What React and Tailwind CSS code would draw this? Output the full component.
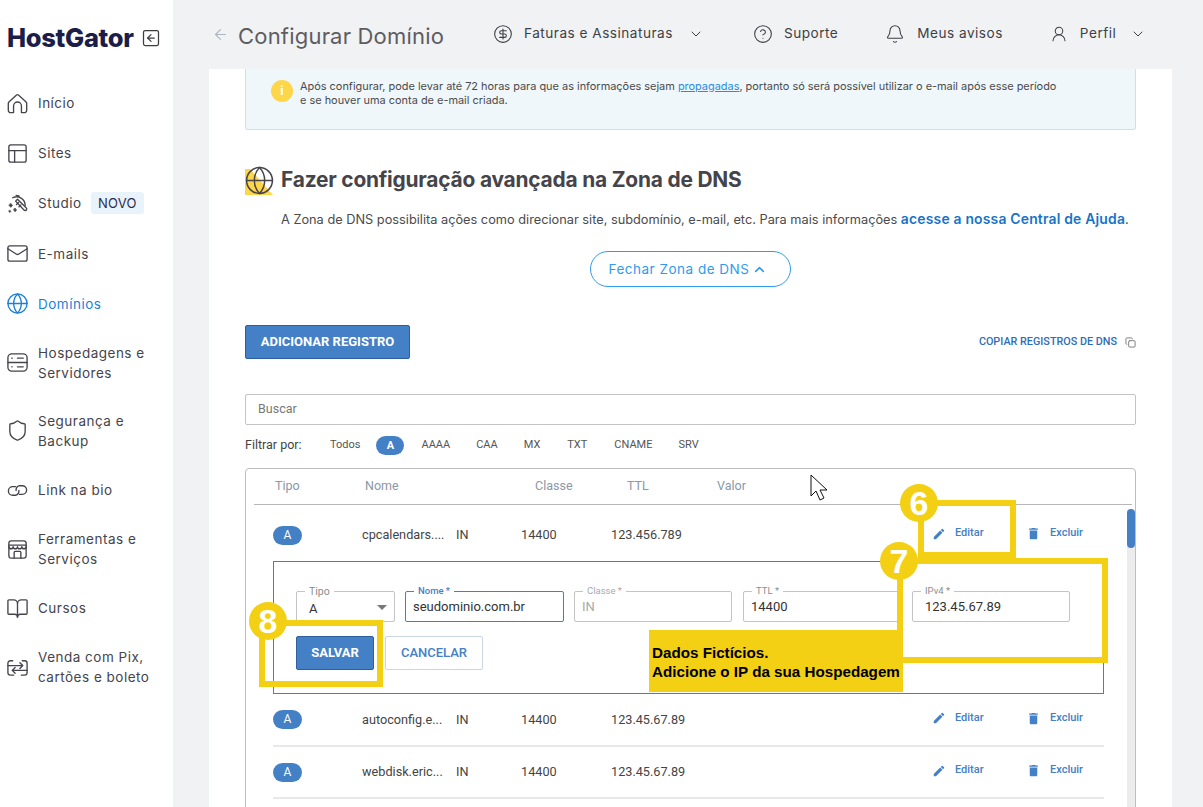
import React from "react";
import { Mail, Globe, Shield, BookOpen, PanelsTopLeft, SquareArrowLeft, CircleDollarSign, CircleHelp, Bell, UserRound, ChevronDown, ChevronUp, ArrowLeft, Copy } from "lucide-react";

const Base = ({ children, ...p }) => (
  <svg viewBox="0 0 24 24" fill="none" stroke="currentColor" strokeWidth="1.5" strokeLinecap="round" strokeLinejoin="round" {...p}>{children}</svg>
);
const HouseIcon = (p) => (
  <Base {...p}>
    <path d="M3 10.500 11 3.200a1.500 1.500 0 0 1 2 0l8 7.300a2 2 0 0 1 .6 1.400V19a2.500 2.500 0 0 1-2.500 2.500h-3V14.500a4.100 4.100 0 0 0-8.200 0v7h-3A2.500 2.500 0 0 1 2.400 19v-7.100a2 2 0 0 1 .6-1.400z" />
  </Base>
);
const WandIcon = (p) => (
  <Base {...p}>
    <path d="M10 9.500 12 7.500l9 9a1.400 1.400 0 0 1-2 2.500z" />
    <path d="M13 11l-2 2M15.500 13.500l-2 2" />
    <path d="M7 6a9 9 0 0 1 13 8M10.500 3.500a8 8 0 0 1 3 .6" />
    <path d="M5 12l1.800 2L5 16l-1.800-2zM9.500 17l1.500 1.800-1.500 1.800L8 18.800zM4 19l1 1.200L4 21.400 3 20.200z" fill="currentColor" strokeWidth="0.8" />
  </Base>
);
const ServerIcon = (p) => (
  <Base {...p}>
    <rect x="2" y="3" width="20" height="18" rx="4" />
    <path d="M2 12h20M6 7.500h.5M6 16.500h.5M12 7.500h6M12 16.500h6" />
  </Base>
);
const StoreIcon = (p) => (
  <Base {...p}>
    <rect x="3" y="3" width="18" height="18" rx="2.500" />
    <path d="M3 7.500h18" />
    <path d="M3 9a2.250 2.250 0 0 0 4.500 0 2.250 2.250 0 0 0 4.500 0 2.250 2.250 0 0 0 4.500 0 2.250 2.250 0 0 0 4.500 0" />
    <path d="M8.500 21v-6a1 1 0 0 1 1-1h5a1 1 0 0 1 1 1v6" />
  </Base>
);
const LinkIcon = (p) => (
  <Base {...p}>
    <path d="M10 8H7a4.500 4.500 0 0 0 0 9h3a5 5 0 0 0 3.500-5" />
    <path d="M14 16h3a4.500 4.500 0 0 0 0-9h-3a5 5 0 0 0-3.500 5" />
  </Base>
);
const SwapCard = (p) => (
  <Base {...p}>
    <path d="M7 5H4.500A2.500 2.500 0 0 0 2 7.500v10A2.500 2.500 0 0 0 4.500 20H8" />
    <path d="M17 5h2.500A2.500 2.500 0 0 1 22 7.500v10a2.500 2.500 0 0 1-2.500 2.500H16" />
    <path d="M2 10h15.500M14.500 7l3 3-3 3" />
    <path d="M22 15H6.500M9.500 12l-3 3 3 3" />
  </Base>
);
const Pencil = () => (
  <svg viewBox="0 0 24 24" className="w-[14px] h-[14px] fill-[#4480c5]"><path d="M3 17.250V21h3.750L17.810 9.940l-3.750-3.750L3 17.250zM20.710 7.040c.39-.39.39-1.020 0-1.410l-2.340-2.340c-.39-.39-1.020-.39-1.410 0l-1.830 1.830 3.750 3.750 1.830-1.830z" /></svg>
);
const Trash = () => (
  <svg viewBox="0 0 24 24" className="w-[15px] h-[15px] fill-[#4480c5]"><path d="M6 19c0 1.100.9 2 2 2h8c1.100 0 2-.9 2-2V7H6v12zM19 4h-3.500l-1-1h-5l-1 1H5v2h14V4z" /></svg>
);

const nav = [
  { icon: HouseIcon, label: "Início" },
  { icon: PanelsTopLeft, label: "Sites" },
  { icon: WandIcon, label: "Studio", badge: "NOVO" },
  { icon: Mail, label: "E-mails" },
  { icon: Globe, label: "Domínios", active: true },
  { icon: ServerIcon, label: "Hospedagens e Servidores", two: true },
  { icon: Shield, label: "Segurança e Backup", two: true },
  { icon: LinkIcon, label: "Link na bio" },
  { icon: StoreIcon, label: "Ferramentas e Serviços", two: true },
  { icon: BookOpen, label: "Cursos" },
  { icon: SwapCard, label: "Venda com Pix, cartões e boleto", two: true },
];

function NavItem({ item }) {
  const Icon = item.icon;
  return (
    <div className={`flex items-center pl-[6px] ${item.two ? "h-[68px]" : "h-[50.200px]"} ${item.active ? "text-[#1b7fdb]" : "text-[#45444c]"}`}>
      <Icon className="w-[23px] h-[23px] shrink-0" strokeWidth={1.4} />
      <span className="ml-[9px] w-[118px] text-[13.500px] leading-[20px] tracking-[0.5px] font-normal">{item.label}</span>
      {item.badge && (
        <span className="-ml-[65px] px-[7px] h-[22px] leading-[22px] rounded-[3px] bg-[#e9f3fb] text-[13px] tracking-[0.2px] text-[#2c2b4d]">{item.badge}</span>
      )}
    </div>
  );
}

function Row({ name, value, h, top }) {
  return (
    <div className={`flex items-center font-['Roboto',sans-serif] ${h} ${top}`}>
      <span className="w-[29px] h-[19px] rounded-full bg-[#4480c5] text-white text-[12px] leading-[19px] text-center">A</span>
      <span className="ml-[60px] w-[94px] text-[12.700px] text-[#444]">{name}</span>
      <span className="w-[65px] text-[12.700px] text-[#444]">IN</span>
      <span className="w-[90px] text-[12.700px] text-[#444]">14400</span>
      <span className="w-[321px] text-[12.700px] text-[#444]">{value}</span>
      <span className="flex items-center -mt-[3px]">
        <Pencil />
        <span className="ml-[9px] w-[71px] text-[11px] font-medium text-[#4480c5]">Editar</span>
        <Trash />
        <span className="ml-[9px] text-[11px] font-medium text-[#4480c5]">Excluir</span>
      </span>
    </div>
  );
}

function Field({ label, value, w, tone = "text-[#333]", border = "border-[#c4c4c4]", labelTone = "text-[#8d8d8d]", pl = "pl-[7px]" }) {
  return (
    <div className={`relative h-[31px] border rounded-[2px] ${w} ${border} ${pl} flex items-center`}>
      <span className={`absolute -top-[6px] left-[8px] px-[4px] bg-white text-[9.500px] leading-[10px] ${labelTone}`}>{label}</span>
      <span className={`text-[13px] ${tone}`}>{value}</span>
    </div>
  );
}

const Circle = ({ n, cls }) => (
  <div className={`absolute w-[38px] h-[38px] rounded-full bg-[#f3d013] text-white text-[34px] leading-[38px] text-center font-bold font-['Liberation_Sans',sans-serif] ${cls}`}>{n}</div>
);

const top = "text-[13.600px] tracking-[0.5px] -mt-[2px] whitespace-nowrap";

export default function App() {
  return (
    <div className="relative flex w-[1203px] h-[807px] overflow-hidden bg-[#f1f2f4] font-['Inter',sans-serif]">
      <aside className="w-[173px] shrink-0 bg-white">
        <div className="h-[78px] pl-[7px] pt-[21px] flex items-start">
          <span className="text-[25.500px] leading-[34px] font-extrabold tracking-[-0.3px] text-[#1c1d48]">HostGator</span>
          <SquareArrowLeft className="ml-[7px] mt-[7px] w-[20px] h-[20px] text-[#3d3d42]" strokeWidth={1.5} />
        </div>
        <nav>{nav.map((n) => <NavItem key={n.label} item={n} />)}</nav>
      </aside>

      <main className="flex-1 flex flex-col min-w-0">
        <header className="h-[69px] shrink-0 flex items-center pl-[39px] text-[#3f3f46]">
          <ArrowLeft className="w-[17px] h-[17px] text-[#a9b5c3]" strokeWidth={1.5} />
          <span className="ml-[9px] w-[255px] text-[22px] tracking-[0.2px] text-[#5e5c60] mt-[3px] whitespace-nowrap">Configurar Domínio</span>
          <CircleDollarSign className="w-[20px] h-[20px] -mt-[2px]" strokeWidth={1.3} />
          <span className={`ml-[11px] ${top}`}>Faturas e Assinaturas</span>
          <ChevronDown className="ml-[15px] w-[16px] h-[16px] -mt-[2px]" strokeWidth={1.5} />
          <CircleHelp className="ml-[49px] w-[20px] h-[20px] -mt-[2px]" strokeWidth={1.3} />
          <span className={`ml-[11px] ${top}`}>Suporte</span>
          <Bell className="ml-[47px] w-[20px] h-[20px] -mt-[2px]" strokeWidth={1.3} />
          <span className={`ml-[12px] ${top}`}>Meus avisos</span>
          <UserRound className="ml-[47px] w-[18px] h-[18px] -mt-[2px]" strokeWidth={1.4} />
          <span className={`ml-[12px] ${top}`}>Perfil</span>
          <ChevronDown className="ml-[14px] w-[16px] h-[16px] -mt-[2px]" strokeWidth={1.5} />
        </header>

        <section className="ml-[36px] w-[963px] flex-1 bg-white px-[36px] overflow-hidden">
          <div className="h-[61px] bg-[#f0f7fb] border border-t-0 border-[#d3dee6] rounded-b-[3px] flex items-start pl-[25px] pt-[10px]">
            <span className="mt-[1px] w-[22px] h-[22px] rounded-full bg-[#fed649] text-white text-[12px] leading-[22px] text-center font-bold">i</span>
            <p className="ml-[7px] text-[10.930px] leading-[14px] text-[#4b4b4b] whitespace-nowrap">
              Após configurar, pode levar até 72 horas para que as informações sejam <span className="underline text-[#2a8be0]">propagadas</span>, portanto só será possível utilizar o e-mail após esse período<br />e se houver uma conta de e-mail criada.
            </p>
          </div>

          <div className="mt-[37px] flex items-center h-[28px]">
            <span className="relative w-[28px] h-[28px] shrink-0">
              <svg viewBox="0 0 28 28" className="absolute inset-0 w-[28px] h-[28px]"><path d="M0 2h5l23 26H0z" fill="#fed649" /></svg>
              <Globe className="absolute -left-[1px] -top-[2px] w-[31px] h-[31px] text-[#48464b]" strokeWidth={1.2} />
            </span>
            <h2 className="ml-[8px] -mt-[2px] text-[20.900px] font-bold tracking-[-0.2px] text-[#45444a] whitespace-nowrap">Fazer configuração avançada na Zona de DNS</h2>
          </div>
          <p className="mt-[14px] pl-[36px] text-[12.770px] leading-[20px] text-[#4b4b4b] whitespace-nowrap">
            A Zona de DNS possibilita ações como direcionar site, subdomínio, e-mail, etc. Para mais informações <span className="text-[13.900px] tracking-[0.2px] font-semibold text-[#1674c8]">acesse a nossa Central de Ajuda</span>.
          </p>
          <div className="mt-[21px] flex justify-center">
            <span className="w-[201px] h-[36px] pr-[5px] rounded-full border border-[#2f9bee] text-[#2f9bee] text-[13.500px] tracking-[0.5px] flex items-center justify-center">
              Fechar Zona de DNS<ChevronUp className="ml-[3px] w-[15px] h-[15px]" strokeWidth={2.500} />
            </span>
          </div>

          <div className="font-['Roboto',sans-serif]">
            <div className="mt-[38px] flex items-center justify-between">
              <span className="w-[165px] h-[34px] rounded-[2px] bg-[#4480c5] border border-[#2f5f9f] text-white text-[13px] font-bold flex items-center justify-center">ADICIONAR REGISTRO</span>
              <span className="flex items-center text-[10.800px] font-medium text-[#2f6db5]">COPIAR REGISTROS DE DNS<Copy className="ml-[8px] w-[11px] h-[11px] text-[#777]" /></span>
            </div>
            <div className="mt-[35px] h-[31px] border border-[#c4c4c4] rounded-[2px] pl-[12px] flex items-center text-[12.500px] text-[#777]">Buscar</div>
            <div className="mt-[10px] h-[20px] flex items-center text-[11px] text-[#555]">
              <span className="w-[85px] text-[12.500px] text-[#444]">Filtrar por:</span>
              <span>Todos</span>
              <span className="ml-[16px] w-[28px] h-[19px] rounded-full bg-[#4480c5] text-white font-bold leading-[19px] text-center">A</span>
              <span className="ml-[17px]">AAAA</span>
              <span className="ml-[26px]">CAA</span>
              <span className="ml-[26px]">MX</span>
              <span className="ml-[27px]">TXT</span>
              <span className="ml-[27px]">CNAME</span>
              <span className="ml-[26px]">SRV</span>
            </div>

            <div className="relative mt-[13px] h-[420px] border border-[#bdbdbd] rounded-[4px] overflow-hidden">
              <div className="mx-[8px] h-[36px] w-[878px] border-b border-[#b5b7bb] flex items-center text-[12.500px] text-[#8b98a5]">
                <span className="ml-[21px] w-[90px]">Tipo</span>
                <span className="w-[170px]">Nome</span>
                <span className="w-[92px]">Classe</span>
                <span className="w-[90px]">TTL</span>
                <span>Valor</span>
              </div>
              <div className="absolute right-0 top-[40px] bottom-0 w-[8px] bg-[#ececec] rounded-t-[4px]">
                <div className="h-[39px] bg-[#4480c5] rounded-[4px]" />
              </div>
              <div className="pl-[27px] w-[858px]">
                <Row name="cpcalendars...." value="123.456.789" h="h-[56px]" top="pt-[4px]" />
                <div className="h-[133px] border border-[#4480c5] pl-[22px] pt-[29px]">
                  <div className="flex gap-[10px]">
                    <div className="relative h-[31px] w-[99px] border border-[#c4c4c4] rounded-[2px] pl-[12px] pt-[7px] text-[13px] text-[#333]">
                      <span className="absolute -top-[6px] left-[8px] px-[4px] bg-white text-[10.500px] leading-[12px] text-[#8d8d8d]">Tipo</span>
                      A
                      <span className="absolute right-[7px] top-[13px] w-0 h-0 border-x-[5px] border-x-transparent border-t-[5px] border-t-[#777]" />
                    </div>
                    <Field label="Nome *" value="seudominio.com.br" w="w-[159px]" border="border-[#4480c5]" labelTone="text-[#4480c5] font-medium" />
                    <Field label="Classe *" value="IN" w="w-[158px]" tone="text-[#aaa]" labelTone="text-[#aaa]" />
                    <div className="ml-[1px]"><Field label="TTL *" value="14400" w="w-[158px]" /></div>
                    <div className="ml-[1px]"><Field label="IPv4 *" value="123.45.67.89" w="w-[158px]" pl="pl-[12px]" /></div>
                  </div>
                  <div className="mt-[14px] flex gap-[11px]">
                    <span className="w-[78px] h-[34px] rounded-[2px] bg-[#4480c5] border border-[#2f5f9f] text-white text-[13px] font-bold flex items-center justify-center">SALVAR</span>
                    <span className="w-[98px] h-[34px] rounded-[2px] border border-[#ccd6e0] text-[#4480c5] text-[13px] font-medium flex items-center justify-center">CANCELAR</span>
                  </div>
                </div>
                <Row name="autoconfig.e..." value="123.45.67.89" h="h-[51px]" top="" />
                <div className="h-[2px] bg-[#e8e8e8]" />
                <Row name="webdisk.eric..." value="123.45.67.89" h="h-[50px]" top="" />
                <div className="h-[2px] bg-[#e8e8e8]" />
              </div>
            </div>
          </div>
        </section>
      </main>

      {/* Anotações sobre a captura */}
      <div className="absolute left-[918px] top-[500px] w-[98px] h-[58px] border-[6px] border-[#f3d013]" />
      <div className="absolute left-[897px] top-[558px] w-[211px] h-[105px] border-[6px] border-[#f3d013]" />
      <div className="absolute left-[259px] top-[620px] w-[124px] h-[67px] border-[6px] border-[#f3d013]" />
      <Circle n="6" cls="left-[900px] top-[484px]" />
      <Circle n="7" cls="left-[880px] top-[542px]" />
      <Circle n="8" cls="left-[249px] top-[602px]" />
      <div className="absolute left-[649px] top-[630px] w-[254px] h-[62px] bg-[#f3d013] pl-[3px] pt-[13px] text-[15.200px] leading-[19px] font-bold text-black font-['Liberation_Sans',sans-serif] whitespace-nowrap">
        Dados Fictícios.<br />Adicione o IP da sua Hospedagem
      </div>
      <svg viewBox="0 0 18 27" className="absolute left-[810px] top-[474px] w-[18px] h-[27px]">
        <path d="M1 1v21l5-5 4 9 4-2-4-8h7z" fill="#fff" stroke="#111" strokeWidth="1" />
      </svg>
    </div>
  );
}
